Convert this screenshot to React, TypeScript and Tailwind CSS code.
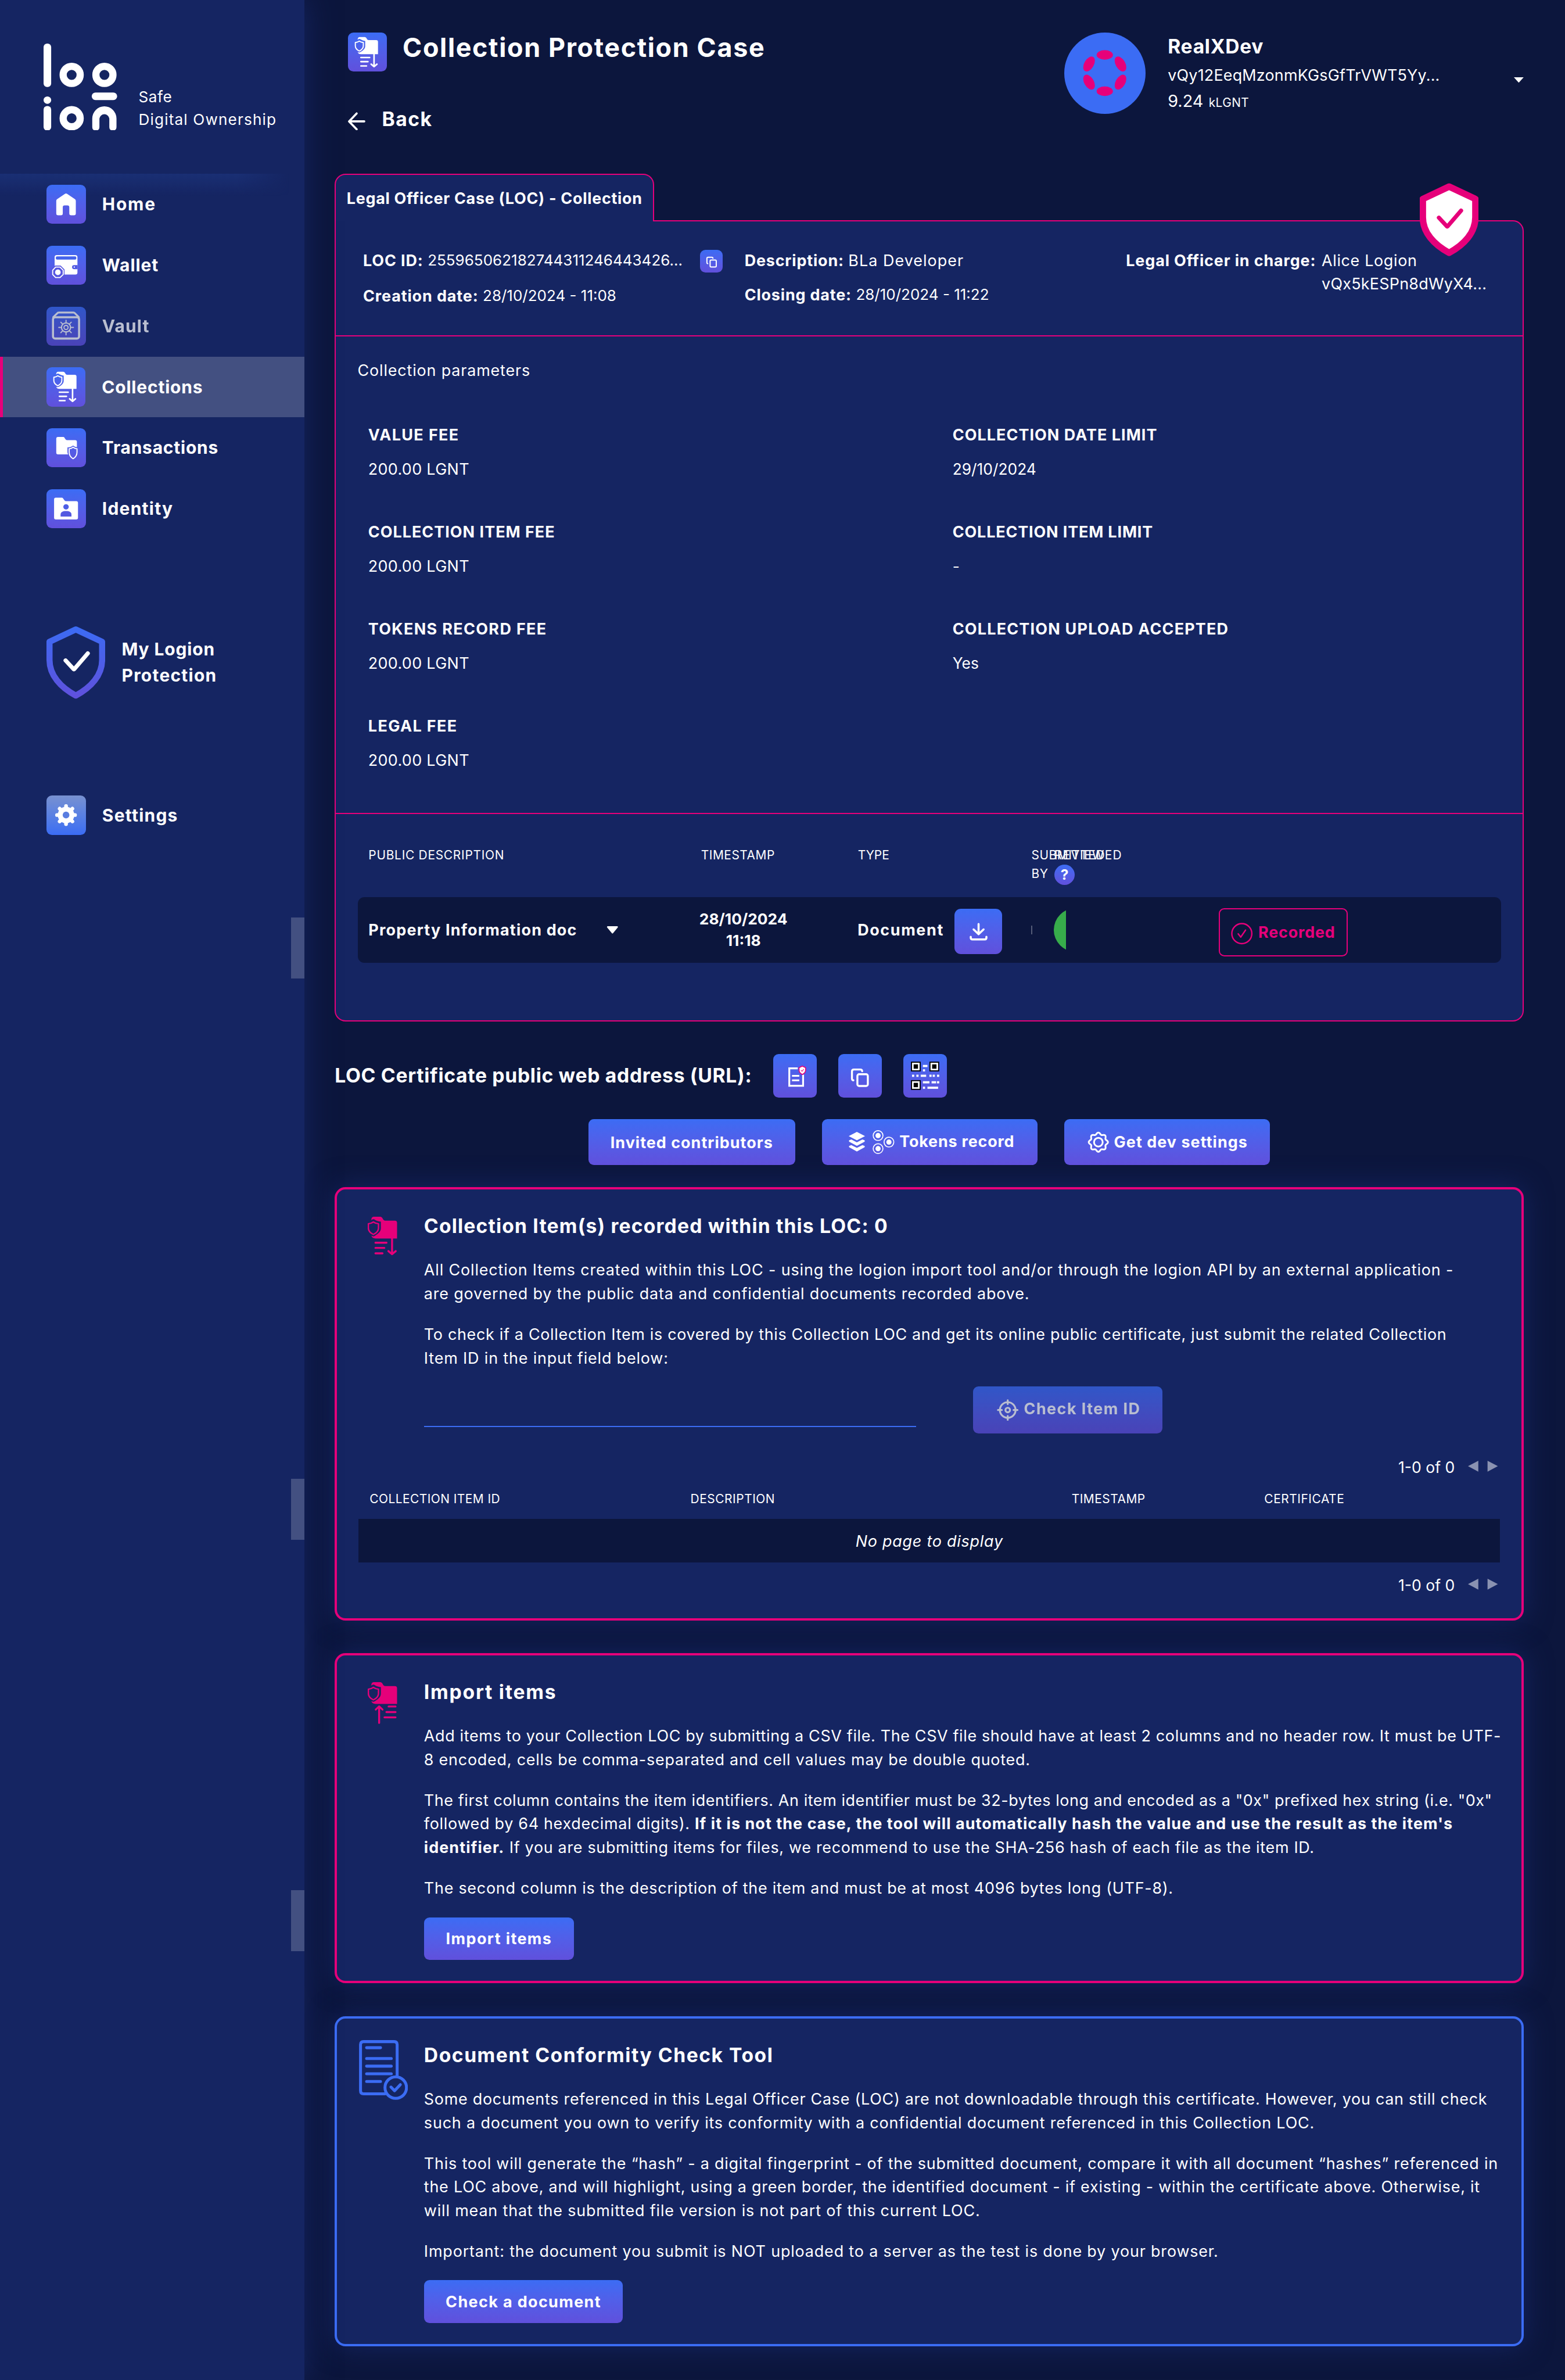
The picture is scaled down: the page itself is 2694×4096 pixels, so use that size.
import { useId, type ReactNode } from "react";

const BTN = "bg-linear-to-b from-[#3b6cf4] to-[#6050dc]";
const BODY = "text-[14.4px] leading-[21.6px] tracking-[0.031em] whitespace-nowrap";
const BOLD = "font-bold text-[14.4px] leading-[21.6px] whitespace-nowrap";
const DIGITS = "text-[13.9px] leading-[21.6px] whitespace-nowrap";
const SMALL = "text-[11.2px] leading-[16.8px] whitespace-nowrap";

/* ---------- icons ---------- */

function ShieldedFolder() {
  return (
    <>
      <path
        fill="currentColor"
        d="M3.3 3.2C3.3 1.1 4.1 0 5.8 0H11.4C12.6 0 13.3.7 13.8 1.8 14.4 3.1 14.9 3.6 16.2 3.6H24.9C26.4 3.6 27 4.3 27 5.6V20H7.3C5.2 20 3.9 19.2 3.3 17.4 4.6 18.1 5.3 18.3 6.6 17.5 9.8 15.7 12.1 13.7 12.1 10.6V4.6C9.6 4.3 7.9 3.6 6.2 2.5 5 1.9 4.2 2.4 3.3 3.2Z"
      />
      <path
        fill="none"
        stroke="currentColor"
        strokeWidth="1.3"
        strokeLinejoin="round"
        d="M5.2 4.8C6.8 5.9 8.3 6.3 9.9 6.5V10.4C9.9 13.2 7.6 15.2 5.2 16.3 2.8 15.2.6 13.2.6 10.4V6.5C2.1 6.3 3.7 5.9 5.2 4.8Z"
      />
    </>
  );
}

function CollectionShape() {
  return (
    <>
      <ShieldedFolder />
      <path
        fill="none"
        stroke="currentColor"
        strokeWidth="1.8"
        strokeLinecap="round"
        strokeLinejoin="round"
        d="M7.1 23.9H17.3M7.1 28.7H15.3M7.1 33.7H13.6M22.4 20V34.3M19 31.6L22.4 34.5 25.8 31.6"
      />
    </>
  );
}

function ImportShape() {
  return (
    <>
      <ShieldedFolder />
      <path
        fill="none"
        stroke="currentColor"
        strokeWidth="1.8"
        strokeLinecap="round"
        strokeLinejoin="round"
        d="M19.2 22.4H25.6M17.2 27.5H25.6M15.4 32.4H25.6M10.5 37.5V22.3M7.4 25.2L10.5 22.3 13.6 25.2"
      />
    </>
  );
}

function CollectionTile() {
  return (
    <g transform="translate(6.3 4.1) scale(.79)">
      <CollectionShape />
    </g>
  );
}

function HomeGlyph() {
  return (
    <path
      fill="#fff"
      d="M16.9 8.4Q18 7.6 19.1 8.4L26.2 13.2Q27 13.8 27 14.8V26.3Q27 28 25.3 28H22.7Q21 28 21 26.3V20.7Q21 19 19.3 19H16.7Q15 19 15 20.7V26.3Q15 28 13.3 28H10.7Q9 28 9 26.3V14.8Q9 13.8 9.8 13.2Z"
    />
  );
}

function WalletGlyph() {
  return (
    <>
      <rect x="7.5" y="8.5" width="21" height="18" rx="1.9" fill="#fff" />
      <rect x="8.6" y="9.7" width="18.9" height="3" rx="1.2" fill="#4564ec" />
      <path d="M28.6 17.8H25.4a1.85 1.85 0 0 0 0 3.7H28.6Z" fill="#5059e3" />
      <circle cx="25.6" cy="19.6" r=".6" fill="#fff" />
      <path d="M8 18.2H13L16.6 21.8V26.6L13 30.2H8L4.4 26.6V21.8Z" fill="#5655e0" />
      <path d="M8.4 19.6H12.5L15.4 22.5V26.4L12.5 29.2H8.4L5.7 26.4V22.5Z" fill="none" stroke="#fff" strokeWidth="1" />
      <circle cx="10.5" cy="24.4" r="2.6" fill="#fff" />
    </>
  );
}

function VaultGlyph() {
  return (
    <g fill="none" stroke="#fff" strokeLinecap="round">
      <rect x="6" y="9.6" width="24" height="19.6" rx="2" strokeWidth="1.9" />
      <path d="M6.2 9.6L10.4 5.5Q10.8 5.3 11.5 5.3H24.5Q25.4 5.3 25.8 5.6L29.8 9.6" strokeWidth="1.7" />
      <circle cx="18" cy="19" r="4.2" strokeWidth="1.1" />
      <circle cx="18" cy="19" r="1.9" strokeWidth="1" />
      <path
        strokeWidth="1"
        d="M18 14.8V12.4M18 23.2V25.8M13.8 19H11.3M22.2 19H24.8M15 16L13.2 14.2M21 16L22.8 14.2M15 22L13.2 23.8M21 22L22.8 23.8"
      />
    </g>
  );
}

function TransactionsGlyph() {
  return (
    <>
      <path
        fill="#fff"
        d="M10.6 8H15.5C17 8 17 10.9 19 10.9H26.4Q28 10.9 28 12.5V17.4C26.6 17.3 25.6 16.8 24.5 15.9 23.2 17 21.5 17.6 19.3 17.7V21.5C19.3 22.6 19.5 23.3 20 24H10.6Q9 24 9 22.4V9.6Q9 8 10.6 8Z"
      />
      <path
        fill="none"
        stroke="#fff"
        strokeWidth="1"
        d="M24.5 17.5C25.7 18.4 26.8 18.8 28.1 18.9V22C28.1 24.8 26.6 26.8 24.5 28 22.4 26.8 20.9 24.8 20.9 22V18.9C22.2 18.8 23.3 18.4 24.5 17.5Z"
      />
    </>
  );
}

function IdentityGlyph() {
  return (
    <>
      <path fill="#fff" d="M8.5 7.8H14.2C15.8 7.8 16 11 18 11H27.5Q29 11 29 12.6V26.2Q29 27.8 27.4 27.8H8.6Q7 27.8 7 26.2V9.4Q7 7.8 8.5 7.8Z" />
      <circle cx="18" cy="16.2" r="2.5" fill="#4d5ee6" />
      <path d="M13 25.1V23.2C13 21 15 20 18 20S23 21 23 23.2V25.1Z" fill="#5459e1" />
    </>
  );
}

function GearGlyph() {
  return (
    <>
      <circle cx="18" cy="18" r="7.6" fill="#fff" />
      {[0, 45, 90, 135, 180, 225, 270, 315].map((a) => (
        <path key={a} d="M18 11V9.7" stroke="#fff" strokeWidth="3.4" strokeLinecap="round" transform={`rotate(${a} 18 18)`} />
      ))}
      <circle cx="18" cy="18" r="3.1" fill="#597de0" />
    </>
  );
}

/* Closed outline of a cog with eight rounded lobes. */
const COG_OUTLINE =
  "M" +
  Array.from({ length: 96 }, (_, i) => {
    const a = (i / 96) * Math.PI * 2;
    const r = 8 + 0.85 * Math.cos(8 * a);
    return `${(10 + r * Math.cos(a)).toFixed(2)} ${(10 + r * Math.sin(a)).toFixed(2)}`;
  }).join("L") +
  "Z";

function CogIcon() {
  return (
    <svg viewBox="0 0 20 20" className="size-5" fill="none" stroke="#fff" strokeWidth="1.6" strokeLinejoin="round">
      <path d={COG_OUTLINE} />
      <circle cx="10" cy="10" r="4" />
    </svg>
  );
}

function Tile({ children, muted }: { children: ReactNode; muted?: boolean }) {
  return (
    <div
      className={
        muted
          ? "size-9 shrink-0 rounded-[5px] bg-linear-to-b from-[#7891d0] to-[#3b6cf4]"
          : "size-9 shrink-0 rounded-[5px] text-white bg-linear-to-b from-[#3b6cf4] to-[#6050dc]"
      }
    >
      <svg viewBox="0 0 36 36" className="size-9">
        {children}
      </svg>
    </div>
  );
}

function ShieldCheck({ badge }: { badge?: boolean }) {
  const id = useId();
  return (
    <svg viewBox="0 0 54 67.5" className="h-[67.5px] w-[54px] shrink-0">
      <defs>
        <linearGradient id={id} x1="0" y1="0" x2="0" y2="67" gradientUnits="userSpaceOnUse">
          <stop offset="0" stopColor={badge ? "#e6007a" : "#3b6cf4"} />
          <stop offset="1" stopColor={badge ? "#e6007a" : "#6050dc"} />
        </linearGradient>
      </defs>
      <path
        d="M27 3.3L51.2 14.7V31.5C51.2 45.5 41 56.7 27 64.2 13 56.7 2.8 45.5 2.8 31.5V14.7Z"
        fill={badge ? "#fff" : "none"}
        stroke={`url(#${id})`}
        strokeWidth={badge ? 6 : 5.6}
        strokeLinejoin="round"
      />
      <path
        d="M17.6 31.9L25 39.9Q25.3 40.1 25.6 39.8L38 25.4"
        fill="none"
        stroke={badge ? "#e6007a" : "#fff"}
        strokeWidth="3.8"
        strokeLinecap="round"
        strokeLinejoin="round"
      />
    </svg>
  );
}

function CopyGlyph() {
  return (
    <g fill="none" stroke="#fff" strokeWidth="1.8" strokeLinecap="round">
      <rect x="17.6" y="18.6" width="9.6" height="10.8" rx="1.6" />
      <path d="M13.9 24.2Q12.6 24 12.6 22.6V16Q12.6 14.2 14.4 14.2H20.2Q22 14.2 22 15.8" />
    </g>
  );
}

function DocGlyph() {
  return (
    <>
      <path d="M22.6 13.2H14.8V29.2H27.5V19" fill="none" stroke="#fff" strokeWidth="1.7" />
      <path d="M17.3 20H24M17.3 24.2H24" stroke="#fff" strokeWidth="1.6" />
      <path d="M26.8 11.1L29.8 12.6V15C29.8 16.7 28.4 18 26.8 18.8 25.1 18 23.8 16.7 23.8 15V12.6Z" fill="#fff" stroke="#e6007a" strokeWidth=".9" />
      <path d="M25.6 14.9L26.6 15.9 28.1 13.9" fill="none" stroke="#e6007a" strokeWidth=".6" />
    </>
  );
}

const FINDERS = [
  [7, 7],
  [24, 7],
  [7, 24],
];
const QR_BITS = [
  [18, 10, 4.2, 2], [18, 14, 2, 2],
  [8, 19, 2, 2], [12, 19, 2, 2], [16, 19, 5, 2], [24, 19, 2, 2], [27, 19, 2, 2], [31, 19, 2, 2],
  [18, 25, 6, 2], [26, 25, 4.2, 2], [31, 25, 2, 2],
  [18, 30, 2, 2], [22.2, 30, 9.8, 2],
];

function QrGlyph() {
  return (
    <>
      {FINDERS.map(([x, y]) => (
        <g key={`${x}-${y}`}>
          <rect x={x} y={y} width="9" height="9" fill="#000" />
          <rect x={x + 1} y={y + 1} width="7" height="7" fill="#fff" />
          <rect x={x + 2.5} y={y + 2.5} width="4" height="4" fill="#000" />
        </g>
      ))}
      {QR_BITS.map(([x, y, w, h]) => (
        <rect key={`${x}-${y}`} x={x} y={y} width={w} height={h} fill="#fff" />
      ))}
    </>
  );
}

function SquareButton({ children }: { children: ReactNode }) {
  return (
    <button className={`${BTN} size-10 shrink-0 rounded-[5px]`}>
      <svg viewBox="0 0 40 40" className="size-10">
        {children}
      </svg>
    </button>
  );
}

function TokensIcon() {
  return (
    <svg viewBox="0 0 42.5 22" className="h-[22px] w-[42.5px]">
      <g fill="#fff">
        <path d="M7.5 1.6L15 5.5 7.5 9.4 0 5.5Z" />
        <path d="M.3 9.4L2.4 8.6 7.5 11.2 12.6 8.6 14.7 9.4V10.6L7.5 14.4.3 10.6Z" />
        <path d="M.3 14.5L2.4 13.7 7.5 16.3 12.6 13.7 14.7 14.5V15.7L7.5 19.6.3 15.7Z" />
      </g>
      {[
        [27, 5],
        [37, 11],
        [27, 17],
      ].map(([x, y]) => (
        <g key={`${x}-${y}`}>
          <circle cx={x} cy={y} r="4.5" fill="none" stroke="#fff" strokeWidth=".9" />
          <circle cx={x} cy={y} r="2.4" fill="#fff" />
        </g>
      ))}
    </svg>
  );
}

function TargetIcon() {
  return (
    <svg viewBox="0 0 20 20" className="size-5" fill="none" stroke="#fff" strokeWidth="1.7" strokeLinecap="round">
      <circle cx="10" cy="10" r="7.2" />
      <circle cx="10" cy="10" r="2.1" />
      <path d="M10 1V4.6M10 15.4V19M1 10H4.6M15.4 10H19" />
    </svg>
  );
}

function DocumentCheckIcon() {
  return (
    <svg viewBox="0 0 45 55" className="h-[55px] w-[45px]" fill="none" stroke="#3b6cf4" strokeWidth="2.7" strokeLinecap="round">
      <path d="M35.1 32.5V4.2Q35.1 1.4 32.3 1.4H4.2Q1.4 1.4 1.4 4.2V46.6Q1.4 49.4 4.2 49.4H24" />
      <path d="M7 7H19.8M7 17H29.7M7 24H29.7M7 31H29.7M7 38.1H19.8" />
      <circle cx="33.8" cy="43.7" r="9.9" />
      <path d="M29.4 43.2L32.7 46.6 38 41" strokeLinejoin="round" />
    </svg>
  );
}

/* ---------- sidebar ---------- */

const MENU: { label: string; icon: ReactNode; state?: "active" | "disabled"; track: string }[] = [
  { label: "Home", icon: <HomeGlyph />, track: "tracking-[0.06em]" },
  { label: "Wallet", icon: <WalletGlyph />, track: "tracking-[0.032em]" },
  { label: "Vault", icon: <VaultGlyph />, state: "disabled", track: "tracking-[0.038em]" },
  { label: "Collections", icon: <CollectionTile />, state: "active", track: "tracking-[0.028em]" },
  { label: "Transactions", icon: <TransactionsGlyph />, track: "tracking-[0.027em]" },
  { label: "Identity", icon: <IdentityGlyph />, track: "tracking-[0.042em]" },
];

function MenuItem({ label, icon, state, track }: (typeof MENU)[number]) {
  return (
    <div
      className={
        state === "active"
          ? "flex h-14 items-center gap-[15px] border-l-[3px] border-[#e6007a] bg-white/20 pl-10"
          : "flex h-14 items-center gap-[15px] pl-[43px]"
      }
    >
      <div className={state === "disabled" ? "flex items-center gap-[15px] opacity-70" : "flex items-center gap-[15px]"}>
        <Tile>{icon}</Tile>
        <span className={`text-[16px] leading-6 font-bold ${track}`}>{label}</span>
      </div>
    </div>
  );
}

function Sidebar() {
  return (
    <aside className="z-10 flex w-[280px] shrink-0 flex-col bg-[#152562] shadow-[0_0_25px_#152562]">
      <div className="flex h-40 items-start pt-10 pl-10">
        <svg viewBox="80 80 136 160" className="h-20 w-[68px]">
          <g fill="#fff">
            <rect x="80" y="80" width="14" height="80" rx="6.5" />
            <ellipse cx="87" cy="184" rx="7" ry="6.8" />
            <rect x="80" y="195" width="14" height="45" rx="6.5" />
            <rect x="168.6" y="170" width="46.8" height="14" rx="7" />
            <path d="M169.6 218A22.3 22.6 0 0 1 214.2 218V233.5Q214.2 240 207.6 240T201 233.5V218A9.2 9.4 0 0 0 182.8 218V233.5Q182.8 240 176.2 240T169.6 233.5Z" />
          </g>
          <g fill="none" stroke="#fff" strokeWidth="13.2">
            <ellipse cx="131.7" cy="137.6" rx="15.7" ry="15.8" />
            <ellipse cx="192" cy="137.6" rx="15.7" ry="15.8" />
            <ellipse cx="131.7" cy="217.4" rx="15.7" ry="15.8" />
          </g>
        </svg>
        <div className="pt-[38.5px] pl-[19.5px] text-[14px] leading-[21px]">
          <div className="tracking-[0.02em]">Safe</div>
          <div className="tracking-[0.043em] whitespace-nowrap">Digital Ownership</div>
        </div>
      </div>
      <nav className="relative">
        <div className="pointer-events-none absolute inset-x-0 top-0 h-5 bg-linear-to-b from-[#1a2f74] to-[#152562]/0 [mask-image:linear-gradient(to_right,black_78%,transparent_95%)]" />
        <div className="relative">
          {MENU.map((m) => (
            <MenuItem key={m.label} {...m} />
          ))}
        </div>
      </nav>
      <div className="mt-[79.5px] flex gap-[15px] pl-[43px] text-[16px] leading-6 font-bold">
        <ShieldCheck />
        <div className="pt-[9.7px]">
          <div className="tracking-[0.03em]">My Logion</div>
          <div className="tracking-[0.042em]">Protection</div>
        </div>
      </div>
      <div className="mt-[89px] flex items-center gap-[15px] pl-[43px]">
        <Tile muted>
          <GearGlyph />
        </Tile>
        <span className="text-[16px] leading-6 font-bold tracking-[0.042em]">Settings</span>
      </div>
      <div className="mt-[76px] ml-auto h-14 w-3 bg-white/20" />
      <div className="mt-[460.5px] ml-auto h-14 w-3 bg-white/20" />
      <div className="mt-[322.5px] ml-auto h-14 w-3 bg-white/20" />
    </aside>
  );
}

/* ---------- header ---------- */

function Header() {
  return (
    <header className="flex h-40 items-start pl-3">
      <div className="w-[660px]">
        <div className="flex items-start gap-[14.5px] pt-[30px]">
          <Tile>
            <CollectionTile />
          </Tile>
          <h1 className="text-[24px] leading-7 font-bold tracking-[0.0365em] whitespace-nowrap">Collection Protection Case</h1>
        </div>
        <div className="mt-[30px] flex items-center gap-[15.5px]">
          <svg viewBox="0 0 16 17" className="mt-1 h-[17px] w-4" fill="none" stroke="#fff" strokeWidth="1.9" strokeLinecap="round" strokeLinejoin="round">
            <path d="M15 8.5H1.2M8 1.2L1 8.5 8 15.8" />
          </svg>
          <span className="text-[18px] leading-[27px] font-bold tracking-[0.042em]">Back</span>
        </div>
      </div>
      <div className="flex pt-[30px]">
        <div className="flex size-[75px] items-center justify-center rounded-full bg-[#3b6cf4]">
          <svg viewBox="-25 -25 50 50" className="size-[50px]">
            {[0, 60, 120, 180, 240, 300].map((a) => (
              <ellipse key={a} cx="0" cy="-16.7" rx="7.5" ry="4.4" fill="#e6007a" transform={`rotate(${a})`} />
            ))}
          </svg>
        </div>
        <div className="w-[339px] pl-[20.5px]">
          <div className="text-[18px] leading-[26px] font-bold tracking-[0.02em]">RealXDev</div>
          <div className="text-[14.4px] leading-[26px] tracking-[0.007em] whitespace-nowrap">vQy12EeqMzonmKGsGfTrVWT5Yy...</div>
          <div className="flex items-baseline gap-[5px] text-[15.4px] leading-[22px]">
            <span>9.24</span>
            <span className="text-[11.2px] tracking-[0.018em]">kLGNT</span>
          </div>
        </div>
        <svg viewBox="0 0 9 5" className="mt-[41px] h-[5px] w-[9px] shrink-0">
          <path d="M0 0H9L4.5 5Z" fill="#fff" />
        </svg>
      </div>
    </header>
  );
}

/* ---------- case panel ---------- */

const PARAMS: [string, string, string][] = [
  ["VALUE FEE", "200.00 LGNT", "tracking-[0.052em]"],
  ["COLLECTION DATE LIMIT", "29/10/2024", "tracking-[0.039em]"],
  ["COLLECTION ITEM FEE", "200.00 LGNT", "tracking-[0.038em]"],
  ["COLLECTION ITEM LIMIT", "-", "tracking-[0.032em]"],
  ["TOKENS RECORD FEE", "200.00 LGNT", "tracking-[0.05em]"],
  ["COLLECTION UPLOAD ACCEPTED", "Yes", "tracking-[0.045em]"],
  ["LEGAL FEE", "200.00 LGNT", "tracking-[0.052em]"],
];

function CaseSummary() {
  return (
    <div className="flex h-[106px] border-b-[1.1px] border-[#e6007a] pt-[25px] pl-[25px]">
      <div className="w-[351px]">
        <div className="flex h-[21.6px] items-center">
          <span className={`${BOLD} tracking-[0.033em]`}>LOC ID:</span>
          <span className={`${DIGITS} ml-1 w-[250.5px]`}>255965062182744311246443426...</span>
          <button className={`${BTN} mt-0.5 h-[21px] w-[21px] rounded-[5px]`}>
            <svg viewBox="0 0 40 40" className="size-[21px]">
              <g transform="translate(-2 -3) scale(1.12)">
                <CopyGlyph />
              </g>
            </svg>
          </button>
        </div>
        <div className="mt-[11.4px] flex">
          <span className={`${BOLD} tracking-[0.033em]`}>Creation date:</span>
          <span className={`${DIGITS} ml-1`}>28/10/2024 - 11:08</span>
        </div>
      </div>
      <div className="w-[351px]">
        <div className="flex">
          <span className={`${BOLD} tracking-[0.031em]`}>Description:</span>
          <span className="ml-1 text-[14.4px] leading-[21.6px] tracking-[0.038em]">BLa Developer</span>
        </div>
        <div className="mt-[10px] flex">
          <span className={`${BOLD} tracking-[0.031em]`}>Closing date:</span>
          <span className={`${DIGITS} ml-1`}>28/10/2024 - 11:22</span>
        </div>
      </div>
      <div className="flex">
        <span className={`${BOLD} w-[180px] tracking-[0.032em]`}>Legal Officer in charge:</span>
        <div className="text-[14.4px] leading-[21.6px]">
          <div className="tracking-[0.024em]">Alice Logion</div>
          <div className="tracking-[0.009em]">vQx5kESPn8dWyX4...</div>
        </div>
      </div>
    </div>
  );
}

function CaseParameters() {
  return (
    <div className="h-[439.4px] border-b-[1.1px] border-[#e6007a] pt-5">
      <div className={`${BODY} pl-5`}>Collection parameters</div>
      <div className="mt-[38px] grid grid-cols-[537.7px_1fr] pl-[29.7px]">
        {PARAMS.map(([label, value, track]) => (
          <div key={label} className="h-[89.2px]">
            <div className={`${BOLD} ${track}`}>{label}</div>
            <div className={value.includes("LGNT") ? "mt-[10px] text-[14.4px] leading-[21.6px] tracking-[0.012em]" : "mt-[10px] text-[14.1px] leading-[21.6px]"}>
              {value}
            </div>
          </div>
        ))}
      </div>
    </div>
  );
}

function CaseFiles() {
  return (
    <div className="px-5 pt-[29.5px] pb-[54px]">
      <div className={`flex h-[47px] pl-[10px] ${SMALL} tracking-[0.024em]`}>
        <div className="w-[306px] tracking-[0.034em]">PUBLIC DESCRIPTION</div>
        <div className="w-[144.3px]">TIMESTAMP</div>
        <div className="w-[159.7px] tracking-normal">TYPE</div>
        <div className="w-[21px]">
          SUBMITTED
          <br />
          BY
        </div>
        <div>
          <div className="tracking-[0.06em]">REVIEWED</div>
          <div className={`${BTN} flex size-[19px] items-center justify-center rounded-full text-[13px] font-bold tracking-normal`}>?</div>
        </div>
      </div>
      <div className="flex h-[60px] items-center rounded-md bg-[#0c163d] pl-[10px]">
        <div className="flex w-[219px] items-center">
          <span className={`${BOLD} tracking-[0.045em]`}>Property Information doc</span>
        </div>
        <svg viewBox="0 0 11 7" className="h-[7px] w-[11px]">
          <path d="M1.2.7H9.8L5.5 6Z" fill="#fff" stroke="#fff" strokeWidth="1.4" strokeLinejoin="round" />
        </svg>
        <div className="ml-[70px] w-[90px] text-center text-[14.1px] leading-[20px] font-bold">
          28/10/2024
          <br />
          11:18
        </div>
        <div className={`${BOLD} ml-[60px] w-[89px] tracking-[0.06em]`}>Document</div>
        <button className={`${BTN} mt-[3px] h-[42px] w-11 rounded-[6px]`}>
          <svg viewBox="0 0 44 42" className="h-[42px] w-11" fill="none" stroke="#fff" strokeWidth="1.9" strokeLinecap="round" strokeLinejoin="round">
            <path d="M22.2 14V23.2M17.6 19L22.2 23.4 26.8 19M15 25.8V26.6Q15 28.2 16.6 28.2H28Q29.4 28.2 29.4 26.6V25.8" />
          </svg>
        </button>
        <div className="ml-[27px] h-2 w-[0.6px] bg-white/30" />
        <div className="ml-5 h-10 w-[11px] overflow-hidden">
          <div className="size-10 rounded-full bg-[#37ac4b]" />
        </div>
        <div className="mt-1 ml-[140.6px] flex h-[44.5px] w-[119px] items-center gap-[5px] rounded-[5px] border-[1.1px] border-[#e6007a] pl-[10.5px] text-[#e6007a]">
          <svg viewBox="0 0 20 20" className="mt-[3px] size-5 shrink-0" fill="none" stroke="#e6007a" strokeWidth="1.3" strokeLinecap="round" strokeLinejoin="round">
            <circle cx="10" cy="10" r="9.2" />
            <path d="M6.6 10.2L9 13.2 13.4 6.8" />
          </svg>
          <span className="text-[14.4px] leading-[21.6px] font-bold tracking-[0.031em]">Recorded</span>
        </div>
      </div>
    </div>
  );
}

function CasePanel() {
  return (
    <section>
      <div className="relative z-10 flex h-[43.6px] w-[294px] items-center justify-center rounded-t-[10px] border-[1.1px] border-b-0 border-[#e6007a] bg-[#152562]">
        <span className={`${BOLD} tracking-[0.026em]`}>Legal Officer Case (LOC) - Collection</span>
      </div>
      <div className="relative -mt-[1.1px] h-[737px] rounded-[10px] rounded-tl-none border-[1.1px] border-[#e6007a] bg-[#152562]">
        <CaseSummary />
        <CaseParameters />
        <CaseFiles />
        <div className="absolute -top-[35.3px] right-[40.7px]">
          <ShieldCheck badge />
        </div>
      </div>
    </section>
  );
}

/* ---------- lower panels ---------- */

function Panel({ icon, title, track, blue, className, children }: { icon: ReactNode; title: string; track: string; blue?: boolean; className: string; children: ReactNode }) {
  return (
    <section
      className={`${className} rounded-[10px] border-[2.15px] bg-[#152562] shadow-[0_0_25px_#152562] ${blue ? "border-[#3b6cf4]" : "border-[#e6007a]"}`}
    >
      <div className="flex">
        <div className="w-[80px] shrink-0">{icon}</div>
        <div className="pt-[20.4px]">
          <h2 className={`mb-4 text-[18px] leading-[27px] font-bold whitespace-nowrap ${track}`}>{title}</h2>
          {children}
        </div>
      </div>
    </section>
  );
}

function Pager({ className }: { className: string }) {
  return (
    <div className={`${className} flex items-center pl-[976.5px]`}>
      <span className="w-[64px] text-[14.2px] leading-5 whitespace-nowrap">1-0 of 0</span>
      <svg viewBox="0 0 28 10" className="-mt-0.5 h-[10px] w-7 opacity-50">
        <path d="M9.5 0V10L0 5ZM18 0V10L27.5 5Z" fill="#fff" />
      </svg>
    </div>
  );
}

function Action({ label, width, track }: { label: string; width: string; track: string }) {
  return (
    <button className={`${BTN} ${BOLD} ${width} ${track} h-[39.4px] rounded-[5px]`}>{label}</button>
  );
}

function CollectionItems() {
  return (
    <Panel
      className="mt-5 h-[398.6px]"
      title="Collection Item(s) recorded within this LOC: 0"
      track="tracking-[0.0345em]"
      icon={
        <svg viewBox="0 0 28 36" className="mt-[25px] ml-7 h-9 w-7 text-[#e6007a]">
          <CollectionShape />
        </svg>
      }
    >
      <div className={BODY}>
        <p className="mb-4">
          <span className="tracking-[0.032em]">All Collection Items created within this LOC - using the logion import tool and/or through the logion API by an external application -</span>
          <br />
          are governed by the public data and confidential documents recorded above.
        </p>
        <p>
          <span className="tracking-[0.0255em]">To check if a Collection Item is covered by this Collection LOC and get its online public certificate, just submit the related Collection</span>
          <br />
          Item ID in the input field below:
        </p>
      </div>
      <div className="mt-[15.7px] flex h-[43px]">
        <div className="h-[37px] w-[453px] border-b-[1.1px] border-[#3b6cf4]" />
        <button className={`${BTN} ml-[52px] flex w-[174.5px] items-center gap-[5px] rounded-[5px] pl-[22px] opacity-70`}>
          <TargetIcon />
          <span className={`${BOLD} -mt-[3px] tracking-[0.054em]`}>Check Item ID</span>
        </button>
      </div>
      <div className="-ml-[80px] w-[1090px]">
        <Pager className="mt-[21.3px] h-5" />
        <div className={`mt-[10.5px] flex pl-[30px] ${SMALL} tracking-[0.0205em]`}>
          <div className="w-[295.2px]">COLLECTION ITEM ID</div>
          <div className="w-[350.7px] tracking-[0.025em]">DESCRIPTION</div>
          <div className="w-[177.3px] tracking-[0.024em]">TIMESTAMP</div>
          <div className="tracking-[0.025em]">CERTIFICATE</div>
        </div>
        <div className="mx-[19.8px] mt-[10.3px] flex h-10 items-center justify-center bg-[#0c163d] text-[14.4px] tracking-[0.028em] italic">No page to display</div>
        <Pager className="mt-[11px] h-5" />
      </div>
    </Panel>
  );
}

function ImportItems() {
  return (
    <Panel
      className="mt-[30px] h-[304px]"
      title="Import items"
      track="tracking-[0.052em]"
      icon={
        <svg viewBox="0 0 28 40" className="mt-[25px] ml-7 h-10 w-7 text-[#e6007a]">
          <ImportShape />
        </svg>
      }
    >
      <div className={BODY}>
        <p className="mb-4">
          <span className="tracking-[0.024em]">Add items to your Collection LOC by submitting a CSV file. The CSV file should have at least 2 columns and no header row. It must be UTF-</span>
          <br />
          <span className="tracking-[0.0285em]">8 encoded, cells be comma-separated and cell values may be double quoted.</span>
        </p>
        <p className="mb-4">
          <span className="tracking-[0.0215em]">The first column contains the item identifiers. An item identifier must be 32-bytes long and encoded as a "0x" prefixed hex string (i.e. "0x"</span>
          <br />
          <span className="tracking-[0.026em]">followed by 64 hexdecimal digits). </span>
          <b className="tracking-[0.0397em]">
            If it is not the case, the tool will automatically hash the value and use the result as the item's
            <br />
            identifier.
          </b>{" "}
          <span className="tracking-[0.0253em]">If you are submitting items for files, we recommend to use the SHA-256 hash of each file as the item ID.</span>
        </p>
        <p className="mb-4 tracking-[0.0275em]">The second column is the description of the item and must be at most 4096 bytes long (UTF-8).</p>
      </div>
      <Action label="Import items" width="w-[138px]" track="tracking-[0.052em]" />
    </Panel>
  );
}

function ConformityCheck() {
  return (
    <Panel
      blue
      className="mt-[30px] h-[304px]"
      title="Document Conformity Check Tool"
      track="tracking-[0.045em]"
      icon={
        <div className="pt-5 pl-5">
          <DocumentCheckIcon />
        </div>
      }
    >
      <div className={BODY}>
        <p className="mb-4">
          <span className="tracking-[0.027em]">Some documents referenced in this Legal Officer Case (LOC) are not downloadable through this certificate. However, you can still check</span>
          <br />
          such a document you own to verify its conformity with a confidential document referenced in this Collection LOC.
        </p>
        <p className="mb-4">
          <span className="tracking-[0.0295em]">This tool will generate the “hash” - a digital fingerprint - of the submitted document, compare it with all document “hashes” referenced in</span>
          <br />
          <span className="tracking-[0.0285em]">the LOC above, and will highlight, using a green border, the identified document - if existing - within the certificate above. Otherwise, it</span>
          <br />
          will mean that the submitted file version is not part of this current LOC.
        </p>
        <p className="mb-4">Important: the document you submit is NOT uploaded to a server as the test is done by your browser.</p>
      </div>
      <Action label="Check a document" width="w-[183px]" track="tracking-[0.051em]" />
    </Panel>
  );
}

export default function App() {
  return (
    <div className="flex h-[2189.4px] w-[1440px] overflow-hidden bg-[#0c163d] font-['Inter','Liberation_Sans',sans-serif] text-white [zoom:1.87083]">
      <Sidebar />
      <main className="w-[1160px] pr-[38px] pl-7">
        <Header />
        <CasePanel />
        <div className="mt-[30px] flex h-10 items-center gap-5">
          <span className="w-[383.4px] text-[18px] leading-[27px] font-bold tracking-[0.0205em] whitespace-nowrap">LOC Certificate public web address (URL):</span>
          <SquareButton>
            <DocGlyph />
          </SquareButton>
          <SquareButton>
            <CopyGlyph />
          </SquareButton>
          <SquareButton>
            <QrGlyph />
          </SquareButton>
        </div>
        <div className="mt-5 flex h-[42.5px] justify-center gap-[25px]">
          <button className={`${BTN} ${BOLD} w-[190px] rounded-[5px] tracking-[0.038em]`}>Invited contributors</button>
          <button className={`${BTN} flex w-[198px] items-center gap-1 rounded-[5px] pl-[24.6px]`}>
            <TokensIcon />
            <span className={`${BOLD} -mt-0.5 tracking-[0.03em]`}>Tokens record</span>
          </button>
          <button className={`${BTN} flex w-[189px] items-center gap-[4.5px] rounded-[5px] pl-[21px]`}>
            <CogIcon />
            <span className={`${BOLD} -mt-px tracking-[0.039em]`}>Get dev settings</span>
          </button>
        </div>
        <CollectionItems />
        <ImportItems />
        <ConformityCheck />
      </main>
    </div>
  );
}
